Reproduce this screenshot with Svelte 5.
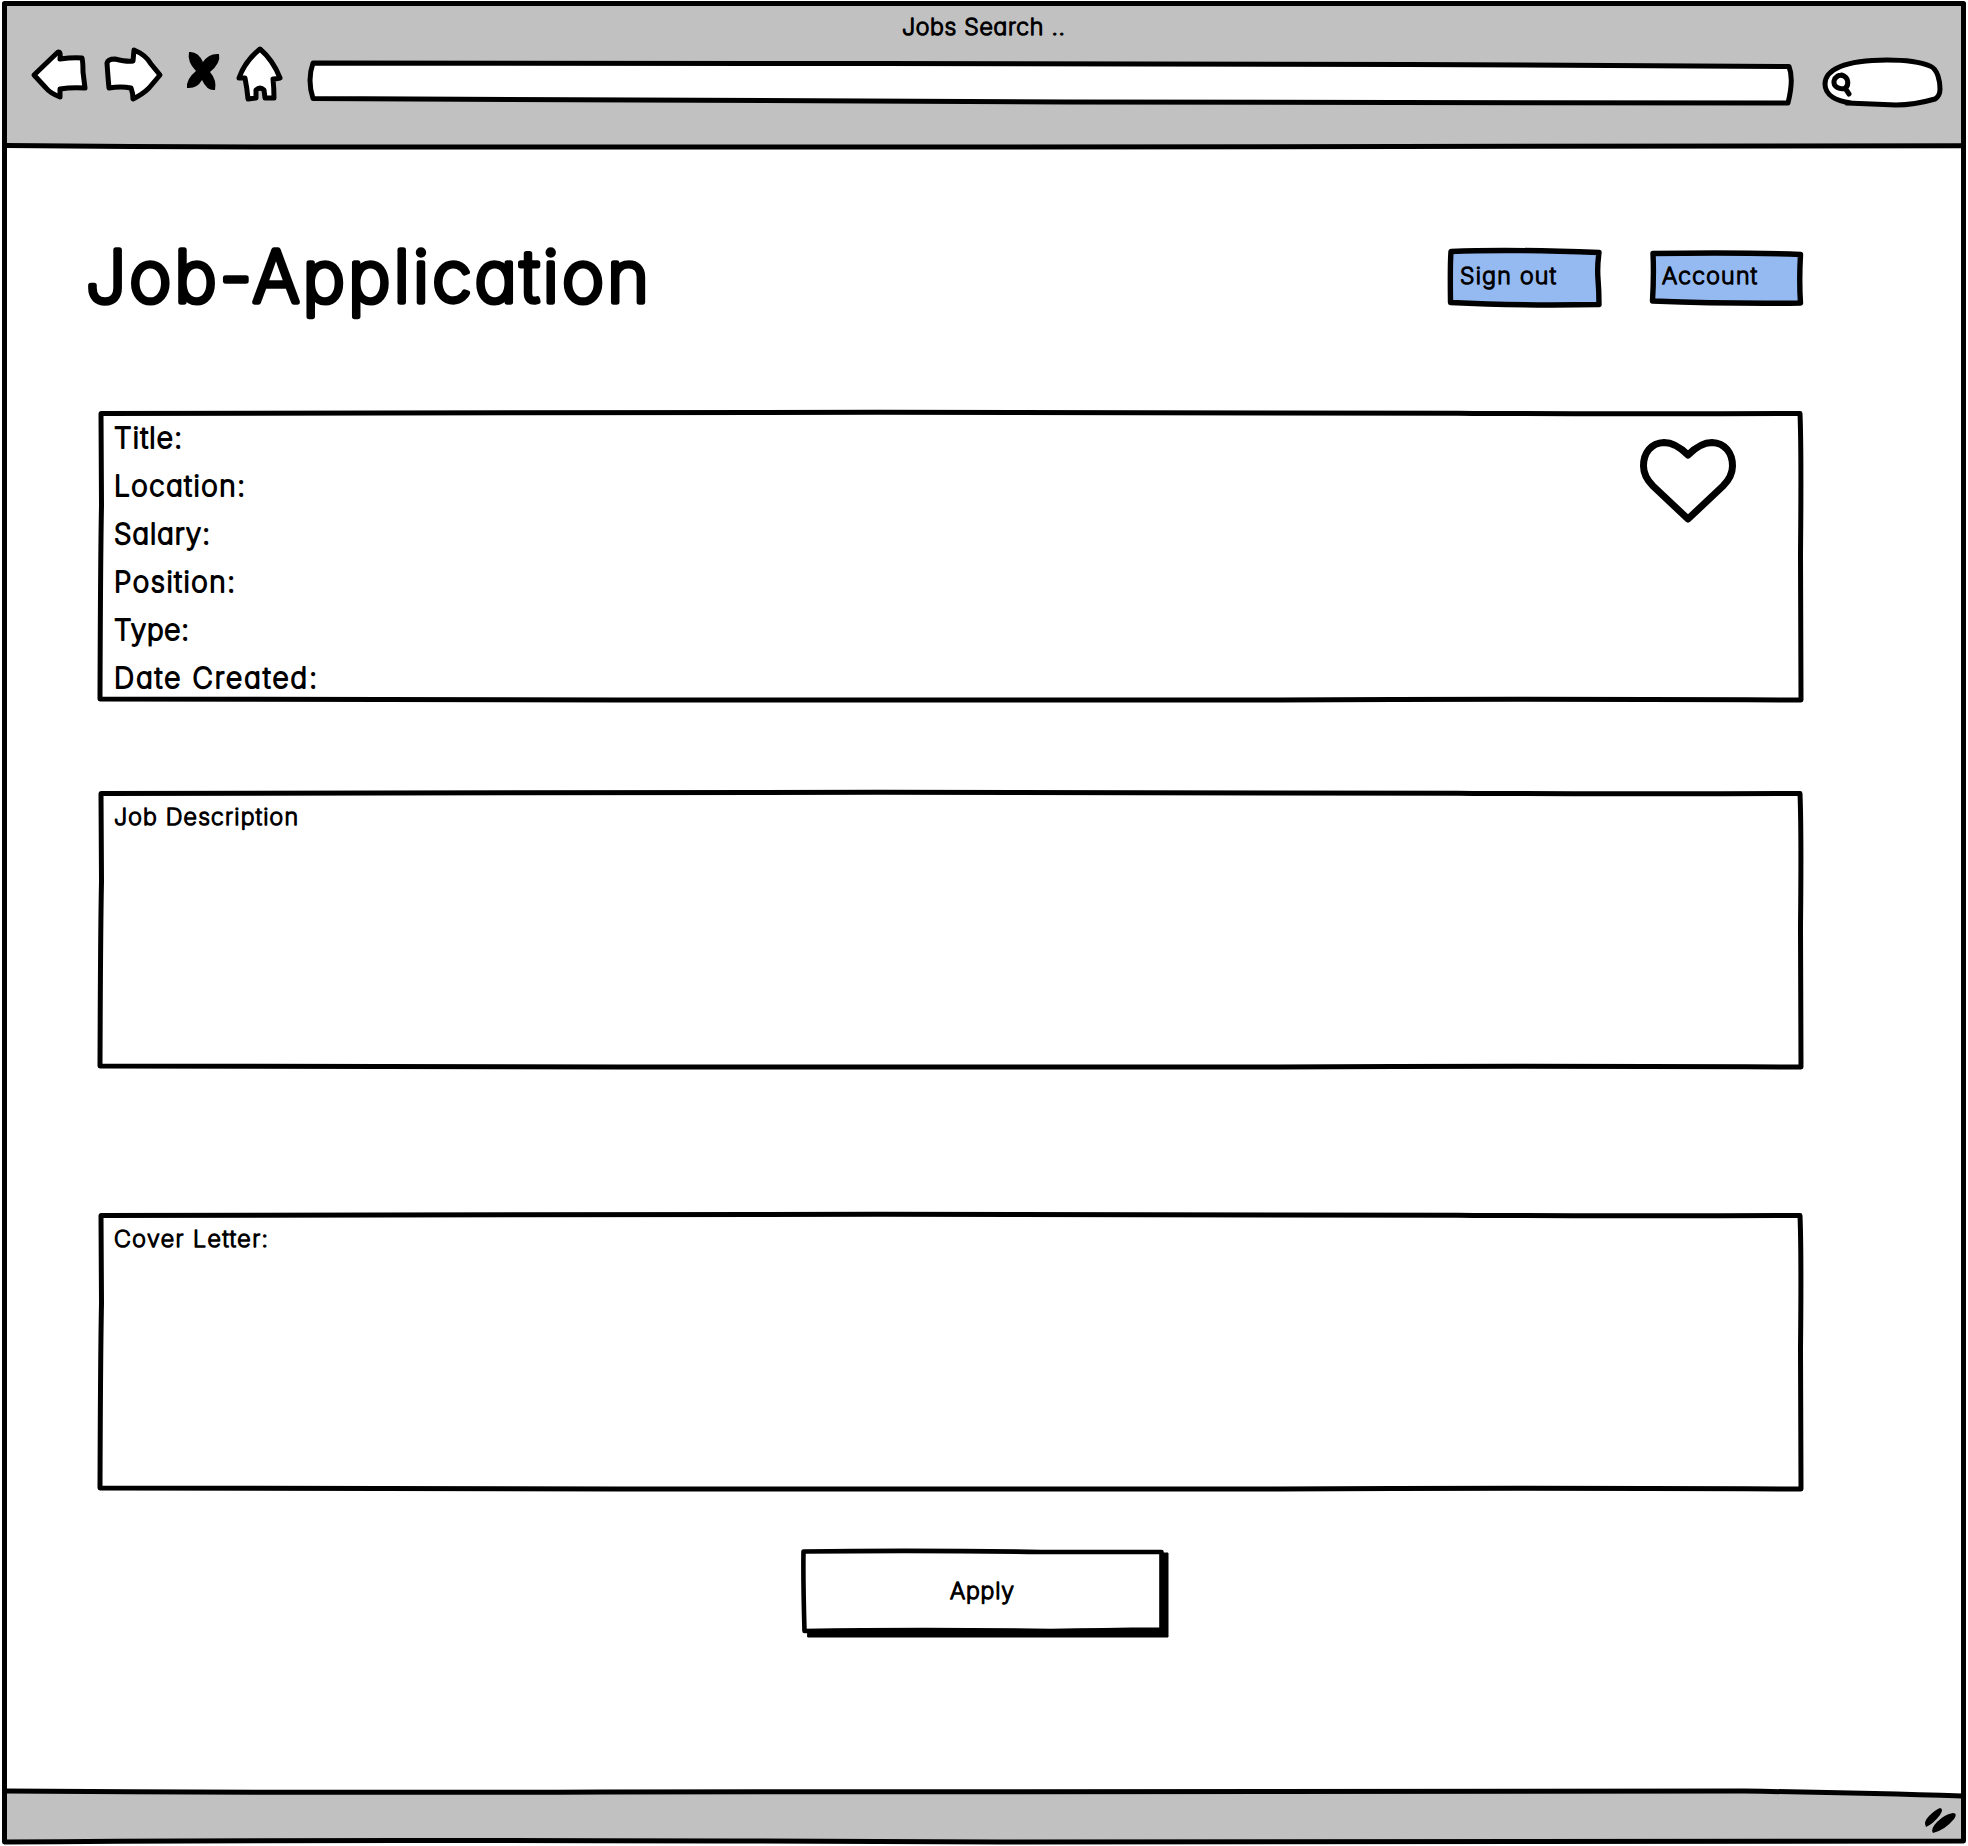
<script>
  const facts = [
    { text: 'Title:', width: 68 },
    { text: 'Location:', width: 131 },
    { text: 'Salary:', width: 96 },
    { text: 'Position:', width: 121 },
    { text: 'Type:', width: 75 },
    { text: 'Date Created:', width: 203 },
  ];
</script>

{#snippet ink(text, width, size)}
  <svg class="ink {size}" {width} height="1em" role="img" aria-label={text}>
    <text x="0" y="0.86em" textLength={width} lengthAdjust="spacing">{text}</text>
  </svg>
{/snippet}

{#snippet outline(height)}
  <svg class="outline" viewBox="0 0 1706 {height + 6}" aria-hidden="true">
    <path
      d="M3 3.5Q360 1.4 780 2.2Q1250 2.2 1360 3.2T1702 3.5Q1703.5 40 1702.5 {height / 2}L1703 {height + 3}Q1400 {height + 1.5} 1180 {height + 3}Q780 {height + 4} 520 {height + 3}T2 {height + 2}Q2.5 {height / 2} 3.5 {height / 3}Z"
    />
  </svg>
{/snippet}

<div class="window">
  <svg class="frame" viewBox="0 0 1968 1846" aria-hidden="true">
    <path
      d="M4.5 3.5H1963.5Q1962.500 400 1963.500 900T1963.5 1841Q1500 1843 1000 1842Q300 1839 4.5 1842Q3 1200 4.5 800Q6 300 4.5 3.5Z"
    />
  </svg>

  <header>
    <div class="caption">{@render ink('Jobs Search ..', 163, 'small')}</div>
    <nav>
      <svg class="back" width="58" height="56" viewBox="0 0 58 56">
        <path d="M5 29 29 6Q32 5 31 13Q45 11 53 12Q54 16 54 26L56 42Q43 41 31 43L31 51Q21 47 17 42Z" />
      </svg>
      <svg class="forward" width="60" height="56" viewBox="0 0 60 56">
        <path d="M4 17Q5 13 12 13Q24 16 30 15L31 4Q43 9 48 18L57 29L46 42Q40 48 30 53Q30 47 28 42Q18 40 6 42Q5 32 4 17Z" />
      </svg>
      <svg class="stop" width="34" height="42" viewBox="0 0 34 42">
        <path d="M1 1Q10 0 15 11Q21 2 31 3Q33 12 22 21Q29 29 27 39Q19 40 14 29Q9 38 -1 37Q-2 28 8 20Q-1 11 1 1Z" />
      </svg>
      <svg class="home" width="46" height="56" viewBox="0 0 46 56">
        <path d="M24 3Q37 14 44 32Q40 33 37 33Q38 42 38 52L29 52 28 44Q24 40 20 44L20 52 12 53Q11 42 9 32L3 32Q9 15 24 3Z" />
      </svg>
      <svg class="address" width="1486" height="46" viewBox="0 0 1486 46">
        <path d="M5 6Q300 5 573 6.500Q900 7 1100 7.500T1481 9.500Q1486 22 1480 46Q1100 46 760 45Q500 43 5 41.500Q-1 23 5 6Z" />
      </svg>
      <svg class="search" width="120" height="52" viewBox="0 0 120 52">
        <path d="M29 47C14 45 3 39 3 28C3 14 22 4 65 4Q94 4 108 10C116 13 118 26 118 33Q118 40 113 43Q92 49 74 49Q49 48 25 47" />
        <path class="lens" d="M19.500 19C27 21 27 29 23.500 32C18 34 11 31 12 25C13 21 17 18 21.500 20M23 32L27 38" />
      </svg>
    </nav>
    <svg class="rule" viewBox="0 0 1960 8" aria-hidden="true">
      <path d="M2 2.500Q150 4 300 4T960 4Q1400 3 1958 2.800" />
    </svg>
  </header>

  <main>
    <div class="top">
      <h1>{@render ink('Job-Application', 563, 'huge')}</h1>
      <div class="actions">
        <button class="chip">
          <svg class="edge" viewBox="0 0 153 58" aria-hidden="true">
            <path d="M3 2.500Q60 0 151 3.500Q149 18 150 30T151 55.500Q70 57 2.500 53.500Q2 15 3 2.500Z" />
          </svg>
          {@render ink('Sign out', 96, 'small')}
        </button>
        <button class="chip second">
          <svg class="edge" viewBox="0 0 153 55" aria-hidden="true">
            <path d="M3 2.500Q90 1 150.500 3.500Q149 30 150.500 52Q80 53 2.500 50Q4 24 3 2.500Z" />
          </svg>
          {@render ink('Account', 95, 'small')}
        </button>
      </div>
    </div>

    <section class="panel summary">
      {@render outline(287)}
      <ul>
        {#each facts as fact}
          <li>{@render ink(fact.text, fact.width, 'medium')}</li>
        {/each}
      </ul>
      <svg class="heart" width="98" height="84" viewBox="0 0 98 84">
        <path d="M49 16C38 5 31 3.500 25 3.500C12 4 4.500 14 4.500 27C4.500 36 9 42 14 47L49 80L84 47C89 42 93.500 36 93.500 27C93.500 14 86 4 73 3.500C67 3.500 60 5 49 16Z" />
      </svg>
    </section>

    <section class="panel description">
      {@render outline(274)}
      {@render ink('Job Description', 184, 'small')}
    </section>

    <section class="panel letter">
      {@render outline(274)}
      {@render ink('Cover Letter:', 154, 'small')}
    </section>

    <button class="apply">
      <svg class="apply-edge" viewBox="0 0 368 89" aria-hidden="true">
        <path class="shadow" d="M7 82H361V4H367V88H7Z" />
        <path d="M2.500 2.500Q120 1 240 3H360.500V80.500Q300 81 250 82Q120 80 3.500 82Q2 30 2.500 2.500Z" />
      </svg>
      {@render ink('Apply', 64, 'small')}
    </button>
  </main>

  <footer>
    <svg class="footer-fill" viewBox="0 0 1960 54" aria-hidden="true">
      <path class="fill" d="M0 3Q300 5 600 4Q1300 1 1740 3Q1860 5 1960 8V54H0Z" />
      <path d="M2 3Q300 5 600 4Q1300 1 1740 3Q1860 5 1958 8" />
    </svg>
    <svg class="grip" width="34" height="28" viewBox="0 0 34 28">
      <path d="M15 0Q19 1 15 7Q8 16 1 19Q-2 14 4 8Q10 2 15 0ZM28 5Q33 5 29 11Q20 22 8 25Q5 21 12 14Q20 6 28 5Z" />
    </svg>
  </footer>
</div>

<style>
  :global(body) {
    background: #fff;
  }

  .window {
    position: relative;
    box-sizing: border-box;
    width: 1968px;
    height: 1846px;
    padding: 4px;
    display: flex;
    flex-direction: column;
    overflow: hidden;
    font-family: Inter, 'Liberation Sans', sans-serif;
  }

  svg {
    display: block;
    flex: none;
    overflow: visible;
    fill: #fff;
    stroke: #000;
    stroke-width: 5;
    stroke-linejoin: round;
    stroke-linecap: round;
  }

  .frame,
  .outline,
  .edge,
  .apply-edge,
  .footer-fill {
    position: absolute;
    fill: none;
    pointer-events: none;
  }

  .frame {
    inset: 0;
    z-index: 2;
  }

  .ink {
    position: relative;
  }

  .ink text {
    fill: #000;
    stroke: #000;
    font-weight: 200;
    font-feature-settings: 'cv11' 1, 'ss03' 1;
  }

  .small {
    font-size: 23.2px;
    stroke-width: 1.6;
  }

  .medium {
    font-size: 28px;
    stroke-width: 1.9;
  }

  .huge {
    font-size: 71px;
    stroke-width: 5.4;
  }

  header {
    height: 141px;
    display: flex;
    flex-direction: column;
    background: #c1c1c1;
  }

  .caption {
    height: 42px;
    padding: 11px 0 0 898px;
    box-sizing: border-box;
  }

  nav {
    flex: 1;
    display: flex;
    align-items: flex-start;
    padding-left: 25px;
  }

  .forward {
    margin-left: 16px;
  }

  .stop {
    margin: 5px 0 0 25px;
    fill: #000;
    stroke: none;
  }

  .home {
    margin-left: 14px;
  }

  .address {
    margin: 11px 0 0 26px;
  }

  .search {
    margin: 10px 0 0 28px;
  }

  .lens {
    stroke-width: 5;
  }

  .rule {
    width: 1960px;
    height: 8px;
    margin-bottom: -6px;
    fill: none;
  }

  main {
    flex: 1;
    display: flex;
    flex-direction: column;
    padding: 104px 162px 0 94px;
  }

  .top {
    display: flex;
    justify-content: space-between;
    height: 161px;
  }

  h1 {
    margin: -8px 0 0 -12px;
    font-size: 71px;
    font-weight: 200;
  }

  .actions {
    display: flex;
    gap: 49px;
    align-items: flex-start;
    margin-right: -1px;
  }

  button {
    position: relative;
    display: flex;
    align-items: flex-start;
    box-sizing: border-box;
    border: 0;
    background: none;
    font: inherit;
  }

  .chip {
    width: 153px;
    height: 57px;
    padding: 15px 0 0 12px;
  }

  .second {
    height: 54px;
    margin-top: 2px;
    padding-top: 13px;
  }

  .edge {
    left: 0;
    top: 0;
    width: 153px;
    fill: #95baf2;
    stroke-width: 5.4;
  }

  .panel {
    position: relative;
    box-sizing: border-box;
    width: 1706px;
    padding-left: 16px;
    flex: none;
  }

  .outline {
    left: 0;
    top: 0;
    width: 1706px;
  }

  .summary {
    display: flex;
    justify-content: space-between;
    height: 293px;
    padding: 14px 67px 0 16px;
  }

  ul {
    margin: 0;
    padding: 0;
    list-style: none;
  }

  li {
    height: 48px;
  }

  .heart {
    margin-top: 15px;
    stroke-width: 7;
  }

  .description,
  .letter {
    height: 280px;
    padding-top: 15px;
  }

  .description {
    margin-top: 87px;
  }

  .letter {
    margin-top: 142px;
  }

  .apply {
    width: 368px;
    height: 89px;
    flex: none;
    margin: 57px 0 0 703px;
    padding: 30px 0 0 149px;
  }

  .apply-edge {
    left: 0;
    top: 0;
    width: 368px;
    fill: #fff;
    stroke-width: 4.6;
  }

  .shadow {
    fill: #000;
    stroke-width: 1;
  }

  footer {
    position: relative;
    height: 54px;
    flex: none;
    display: flex;
    justify-content: flex-end;
    padding: 20px 5px 0 0;
    box-sizing: border-box;
  }

  .footer-fill {
    left: 0;
    top: 0;
    width: 1960px;
  }

  .fill {
    fill: #c1c1c1;
    stroke: none;
  }

  .grip {
    position: relative;
    fill: #000;
    stroke: none;
  }
</style>
